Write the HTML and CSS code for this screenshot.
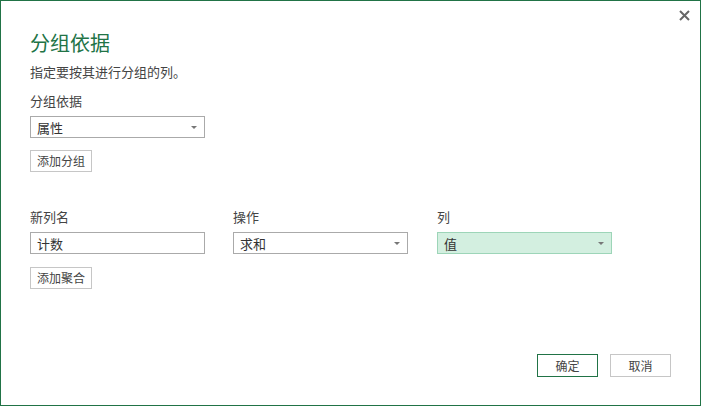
FILE: index.html
```html
<!DOCTYPE html>
<html lang="zh-CN">
<head>
<meta charset="utf-8">
<link rel="stylesheet" href="styles.css">
</head>
<body>
<div class="dialog">
  <button class="close" aria-label="关闭">
    <svg width="11" height="11" viewBox="0 0 11 11"><path d="M1 1L10 10M10 1L1 10" stroke="#666" stroke-width="2"/></svg>
  </button>
  <h1 class="title">分组依据</h1>
  <p class="subtitle">指定要按其进行分组的列。</p>
  <div class="label">分组依据</div>
  <div class="select"><span>属性</span><i class="arrow"></i></div>
  <button class="btn add-group">添加分组</button>

  <div class="agg-row">
    <div class="field">
      <div class="label">新列名</div>
      <div class="input"><span>计数</span></div>
    </div>
    <div class="field">
      <div class="label">操作</div>
      <div class="select"><span>求和</span><i class="arrow"></i></div>
    </div>
    <div class="field col-field">
      <div class="label">列</div>
      <div class="select active"><span>值</span><i class="arrow"></i></div>
    </div>
  </div>
  <button class="btn add-agg">添加聚合</button>

  <div class="footer">
    <button class="btn ok">确定</button>
    <button class="btn cancel">取消</button>
  </div>
</div>
</body>
</html>
```
FILE: styles.css
```css
html, body {
  margin: 0;
  padding: 0;
  background: #fff;
}
body {
  font-family: "Noto Sans CJK SC", "Noto Sans", sans-serif;
  color: #444;
  font-size: 13px;
}
.dialog {
  position: relative;
  width: 701px;
  height: 406px;
  box-sizing: border-box;
  border: 1px solid #217346;
  padding: 29px 29px 0 29px;
  display: flex;
  flex-direction: column;
  align-items: flex-start;
}
.close {
  position: absolute;
  top: 8px;
  right: 9px;
  width: 13px;
  height: 13px;
  padding: 1px;
  border: 0;
  background: transparent;
  display: flex;
}
.title {
  margin: 0;
  font-size: 20px;
  font-weight: normal;
  line-height: 26px;
  color: #217346;
}
.subtitle {
  margin: 7px 0 0;
  line-height: 18px;
  font-size: 13px;
  color: #444;
}
.label {
  line-height: 18px;
  font-size: 13px;
  color: #444;
}
.subtitle + .label {
  margin-top: 11px;
}
.select, .input {
  box-sizing: border-box;
  width: 175px;
  height: 22px;
  border: 1px solid #aaa;
  display: flex;
  align-items: center;
  padding: 0 7px 0 6px;
  font-size: 13px;
  color: #333;
  background: #fff;
}
.label + .select, .label + .input {
  margin-top: 6px;
}
.select span, .input span {
  flex: 1;
}
.arrow {
  width: 0;
  height: 0;
  border-left: 3px solid transparent;
  border-right: 3px solid transparent;
  border-top: 3px solid #777;
}
.select.active {
  background: #d3efe0;
  border-color: #9dd5b8;
}
.btn {
  box-sizing: border-box;
  width: 62px;
  height: 22px;
  border: 1px solid #c6c6c6;
  background: #fff;
  font-family: inherit;
  font-size: 12px;
  color: #444;
  padding: 0;
  line-height: 20px;
}
.add-group {
  margin-top: 12px;
}
.agg-row {
  margin-top: 36px;
  display: flex;
  gap: 28px;
}
.col-field {
  margin-left: 1px;
}
.add-agg {
  margin-top: 13px;
}
.footer {
  margin-top: 65px;
  align-self: flex-end;
  display: flex;
  gap: 12px;
}
.footer .btn {
  width: 61px;
  height: 23px;
}
.btn.ok {
  border-color: #217346;
}
```
